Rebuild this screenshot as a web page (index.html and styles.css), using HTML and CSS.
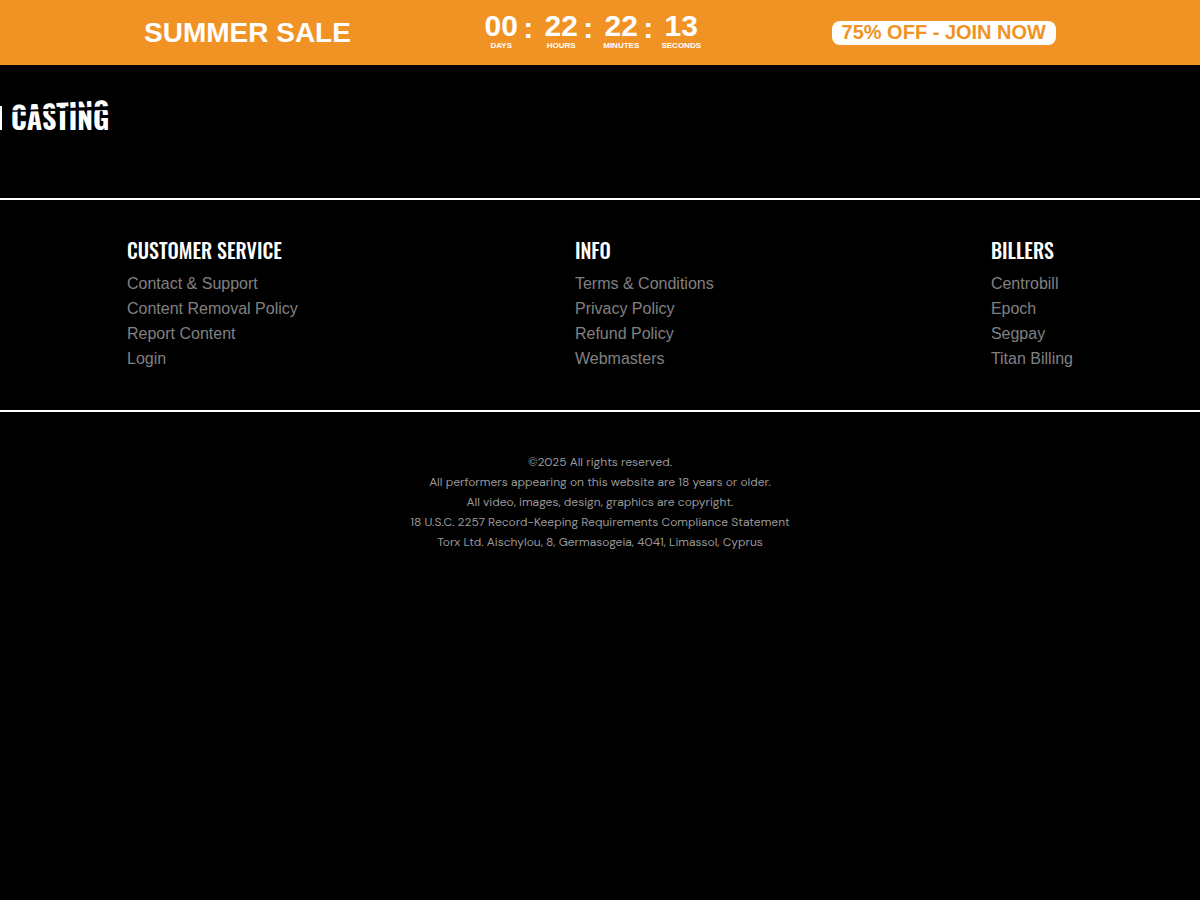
FILE: index.html
```html
<!DOCTYPE html>
<html lang="en">
<head>
<meta charset="utf-8">
<meta name="viewport" content="width=device-width, initial-scale=1">
<title>Casting</title>
<link rel="stylesheet" href="styles.css">
</head>
<body>
<aside class="promo">
  <strong class="promo-title">SUMMER SALE</strong>
  <div class="timer" role="timer">
    <div class="unit"><span class="digits">00</span><span class="label">DAYS</span></div>
    <span class="colon">:</span>
    <div class="unit"><span class="digits">22</span><span class="label">HOURS</span></div>
    <span class="colon">:</span>
    <div class="unit"><span class="digits">22</span><span class="label">MINUTES</span></div>
    <span class="colon">:</span>
    <div class="unit"><span class="digits">13</span><span class="label">SECONDS</span></div>
  </div>
  <a class="promo-join" href="#join">75% OFF - JOIN NOW</a>
</aside>
<header class="header">
  <a class="logo" href="#home" aria-label="Casting">
    <svg width="112" height="36" viewBox="0 0 112 36" aria-hidden="true">
      <defs>
        <clipPath id="lower"><path d="M0 14 L112 12 V36 H0 Z"/></clipPath>
        <clipPath id="upper"><path d="M0 0 H112 V8 L0 13 Z"/></clipPath>
      </defs>
      <rect x="0" y="8" width="2" height="24" fill="#fff"/>
      <g clip-path="url(#lower)"><text class="logo-text" x="11" y="32">CASTING</text></g>
      <g clip-path="url(#upper)"><text class="logo-text" x="11" y="32" transform="translate(0 -2) rotate(-3 12 12)">CASTING</text></g>
    </svg>
  </a>
</header>
<footer class="footer">
  <nav class="columns" aria-label="Footer">
    <section>
      <h2 class="heading">CUSTOMER SERVICE</h2>
      <ul class="links">
        <li><a href="#contact">Contact &amp; Support</a></li>
        <li><a href="#removal">Content Removal Policy</a></li>
        <li><a href="#report">Report Content</a></li>
        <li><a href="#login">Login</a></li>
      </ul>
    </section>
    <section>
      <h2 class="heading">INFO</h2>
      <ul class="links">
        <li><a href="#terms">Terms &amp; Conditions</a></li>
        <li><a href="#privacy">Privacy Policy</a></li>
        <li><a href="#refund">Refund Policy</a></li>
        <li><a href="#webmasters">Webmasters</a></li>
      </ul>
    </section>
    <section>
      <h2 class="heading">BILLERS</h2>
      <ul class="links">
        <li><a href="#centrobill">Centrobill</a></li>
        <li><a href="#epoch">Epoch</a></li>
        <li><a href="#segpay">Segpay</a></li>
        <li><a href="#titan">Titan Billing</a></li>
      </ul>
    </section>
  </nav>
  <div class="legal">
    <p>©2025 All rights reserved.</p>
    <p>All performers appearing on this website are 18 years or older.</p>
    <p>All video, images, design, graphics are copyright.</p>
    <p><a href="#2257">18 U.S.C. 2257 Record-Keeping Requirements Compliance Statement</a></p>
    <p>Torx Ltd. Aischylou, 8, Germasogeia, 4041, Limassol, Cyprus</p>
  </div>
</footer>
</body>
</html>
```
FILE: styles.css
```css
* { box-sizing: border-box; }
body {
  margin: 0;
  background: #000;
  color: #fff;
  font-family: "Liberation Sans", Arial, sans-serif;
}
a { color: inherit; text-decoration: none; }
.promo {
  display: flex;
  justify-content: space-between;
  align-items: center;
  min-height: 65px;
  padding: 0 12%;
  background: #f19324;
  font-weight: bold;
}
.promo-title { font-size: 28px; line-height: 32px; }
.timer { display: flex; padding-bottom: 6px; }
.unit { display: flex; flex-direction: column; align-items: center; width: 40px; }
.digits { font-size: 30px; line-height: 32px; }
.label { font-size: 8px; line-height: 8px; }
.colon { width: 20px; padding-left: 2px; font-size: 30px; line-height: 36px; }
.promo-join {
  height: 24px;
  padding: 0 10px;
  border-radius: 8px;
  background: #fff;
  color: #f19324;
  font-size: 20px;
  line-height: 22px;
}
.header { padding: 33px 0 64px; }
.logo, .logo svg { display: block; }
.logo { width: 112px; }
.logo-text {
  fill: #fff;
  font-family: Oswald, "Liberation Sans Narrow", sans-serif;
  font-size: 28px;
  font-weight: bold;
}
.columns {
  display: flex;
  justify-content: space-between;
  padding: 32px 127px 39px;
  border-top: 2px solid #fff;
  border-bottom: 2px solid #fff;
}
.heading {
  margin: 0;
  padding-bottom: 2px;
  font-family: Oswald, "Liberation Sans Narrow", sans-serif;
  font-size: 20px;
  font-weight: 500;
  line-height: 37px;
}
.links {
  margin: 0;
  padding: 0;
  list-style: none;
  color: #808080;
  font-size: 16px;
  line-height: 25px;
}
.legal {
  padding: 40px 16px;
  color: #999;
  font-family: "DM Sans", Inter, sans-serif;
  font-size: 12px;
  line-height: 20px;
  text-align: center;
}
.legal p { margin: 0; }
```
